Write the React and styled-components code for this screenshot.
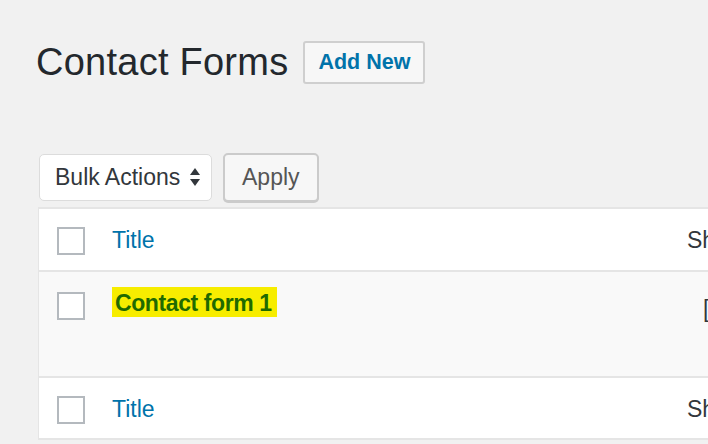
import React from "react";
import styled, { createGlobalStyle } from "styled-components";

const Global = createGlobalStyle`
  html, body { margin: 0; padding: 0; background: #f1f1f1; overflow: hidden; }
  body { font-family: "Liberation Sans", Arial, sans-serif; color: #32373c; }
  * { box-sizing: border-box; }
`;

const Wrap = styled.div`
  padding: 38px 0 0 38px;
  width: 708px;
  height: 444px;
  overflow: hidden;
`;

const HeadRow = styled.div`
  display: flex;
  align-items: center;
  height: 49px;
`;

const Heading = styled.h1`
  margin: 0 0 0 -2px;
  font-size: 38px;
  letter-spacing: 0.25px;
  line-height: 49px;
  font-weight: 400;
  color: #23282d;
`;

const AddNew = styled.button`
  margin-left: 15px;
  height: 43px;
  padding: 0 13px;
  border: 2px solid #cfcfcf;
  border-radius: 3px;
  background: #f7f7f7;
  color: #0073aa;
  font-family: inherit;
  font-weight: 700;
  font-size: 21.5px;
  line-height: 39px;
`;

const Toolbar = styled.div`
  display: flex;
  align-items: center;
  gap: 11px;
  height: 49px;
  margin-top: 66px;
  padding-left: 1px;
`;

const Select = styled.div`
  display: flex;
  align-items: center;
  justify-content: space-between;
  width: 173px;
  height: 47px;
  padding: 0 11px 0 15px;
  background: #fff;
  border: 1px solid #dcdcdc;
  border-radius: 5px;
  font-size: 23px;
  color: #32373c;
`;

const Button = styled.button`
  height: 49px;
  padding: 0 17px;
  border: 2px solid #cbcbcb;
  border-radius: 5px;
  box-shadow: 0 1px 0 #cbcbcb;
  background: #f7f7f7;
  color: #555;
  font-family: inherit;
  font-size: 23px;
`;

const Table = styled.div`
  margin-top: 5px;
  width: 1000px;
  background: #fff;
  border: 2px solid #e5e5e5;
  border-left-width: 1px;
`;

const Row = styled.div`
  display: grid;
  grid-template-columns: 55px 575px auto;
  align-items: start;
  height: ${(p) => p.$h}px;
  padding: ${(p) => p.$pt}px 0 0 18px;
  background: ${(p) => (p.$alt ? "#f9f9f9" : "#fff")};
  border-top: ${(p) => (p.$border ? "2px solid #e5e5e5" : "none")};
`;

const Check = styled.span`
  display: block;
  width: 28px;
  height: 28px;
  margin-top: ${(p) => p.$mt || 0}px;
  border: 2px solid #b4b9be;
  background: #fff;
`;

const TitleLink = styled.a`
  font-size: 23px;
  line-height: 26px;
  color: #0073aa;
  text-decoration: none;
  white-space: nowrap;
`;

const ColHead = styled.span`
  font-size: 23px;
  line-height: 26px;
  color: #32373c;
  white-space: nowrap;
`;

const FormName = styled.a`
  display: inline-block;
  padding: 2px 5px 0 3px;
  line-height: 28px;
  background: #f7ed00;
  color: #1f6a00;
  font-weight: 700;
  font-size: 23px;
  letter-spacing: -0.4px;
  text-decoration: none;
  white-space: nowrap;
`;

const Shortcode = styled.span`
  padding: 8px 0 0 16px;
  font-size: 23px;
  line-height: 28px;
  color: #32373c;
  white-space: nowrap;
`;

const Arrows = () => (
  <svg width="10" height="19" viewBox="0 0 10 19" aria-hidden="true">
    <path d="M5 0 L10 7 L0 7 Z" fill="#32373c" />
    <path d="M0 11 L10 11 L5 18 Z" fill="#32373c" />
  </svg>
);

export default function App() {
  return (
    <>
      <Global />
      <Wrap>
        <HeadRow>
          <Heading>Contact Forms</Heading>
          <AddNew>Add New</AddNew>
        </HeadRow>
        <Toolbar>
          <Select>
            <span>Bulk Actions</span>
            <Arrows />
          </Select>
          <Button>Apply</Button>
        </Toolbar>
        <Table>
          <Row $h={61} $pt={18}>
            <Check />
            <TitleLink href="#">Title</TitleLink>
            <ColHead>Shortcode</ColHead>
          </Row>
          <Row $h={106} $pt={15} $alt $border>
            <Check $mt={5} />
            <div>
              <FormName href="#">Contact form 1</FormName>
            </div>
            <Shortcode>[contact-form-7 id="1" title="Contact form 1"]</Shortcode>
          </Row>
          <Row $h={62} $pt={18} $border>
            <Check />
            <TitleLink href="#">Title</TitleLink>
            <ColHead>Shortcode</ColHead>
          </Row>
        </Table>
      </Wrap>
    </>
  );
}
